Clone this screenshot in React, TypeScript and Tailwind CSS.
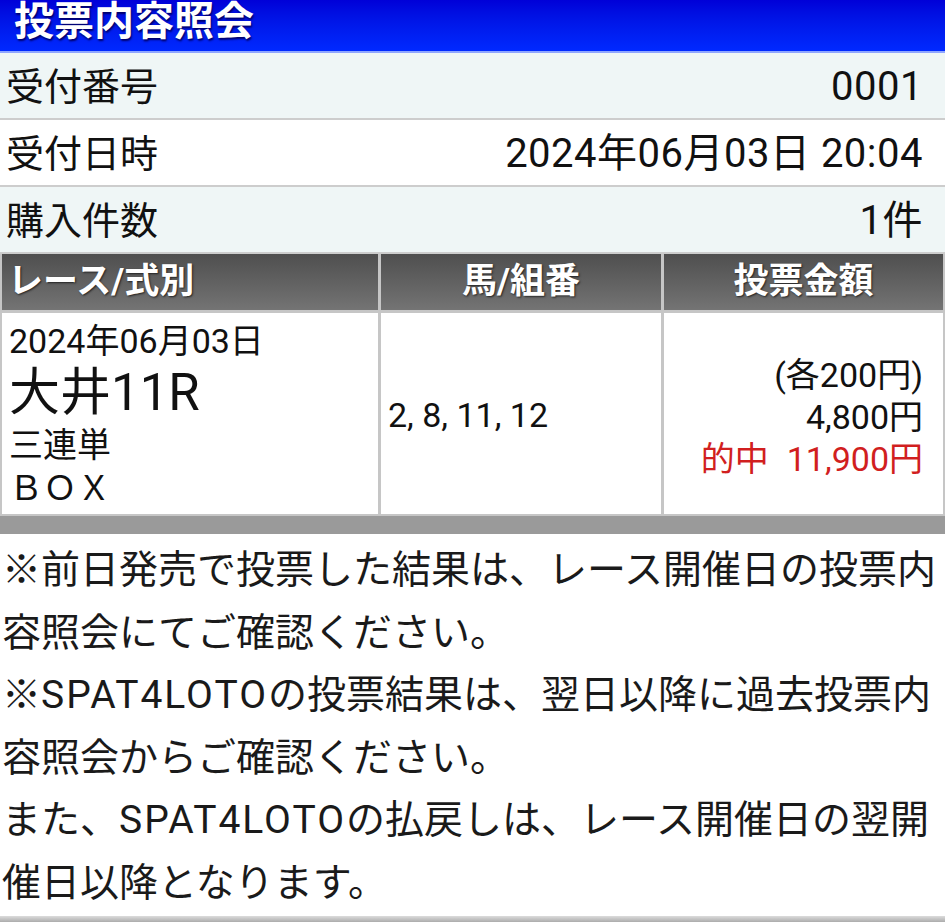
import React from 'react';

const font = "font-['Roboto','Noto_Sans_CJK_JP',sans-serif]";

function InfoRow({ label, value, shaded }: { label: string; value: string; shaded?: boolean }) {
  return (
    <div
      className={`flex h-[67px] items-center justify-between border-b-[2px] border-[#cdcdcd] pl-[6px] pr-[22px] pt-[3px] text-[40px] text-[#111] ${
        shaded ? 'bg-[#eff6f6]' : 'bg-white'
      }`}
    >
      <span className="text-[38px]">{label}</span>
      <span className="tracking-[0.5px]">{value}</span>
    </div>
  );
}

const Spat = () => <span className="tracking-[2px]">SPAT4LOTO</span>;

const headCell =
  'flex h-[56px] items-center bg-gradient-to-b from-[#4f4f4f] to-[#747474] text-[35px] font-bold text-white [text-shadow:1px_1px_2px_#222]';

export default function App() {
  return (
    <div className={`w-[945px] h-[922px] overflow-hidden bg-white ${font}`}>
      {/* title bar */}
      <div className="flex h-[53px] items-center border-b-[2px] border-[#8fa6ff] bg-gradient-to-b from-[#0000d8] to-[#0029ff] px-[14px] pb-[8px]">
        <h1 className="text-[40px] leading-[44px] font-bold text-white [text-shadow:1px_2px_2px_#00006a]">投票内容照会</h1>
      </div>

      <InfoRow label="受付番号" value="0001" shaded />
      <InfoRow label="受付日時" value="2024年06月03日 20:04" />
      <InfoRow label="購入件数" value="1件" shaded />

      {/* bet table */}
      <div className="grid grid-cols-[376px_280px_1fr] gap-[3px] bg-[#c6c6c6] px-[2px] pb-[2px]">
        <div className={`${headCell} pl-[6px]`}>レース/式別</div>
        <div className={`${headCell} justify-center`}>馬/組番</div>
        <div className={`${headCell} justify-center`}>投票金額</div>

        <div className="flex h-[201px] flex-col bg-white pl-[7px] pt-[6px] text-[#111]">
          <div className="text-[34px] leading-[44px]">2024年06月03日</div>
          <div className="text-[51px] leading-[60px]">大井11R</div>
          <div className="text-[34px] leading-[44px]">三連単</div>
          <div className="text-[34px] leading-[42px]">ＢＯＸ</div>
        </div>
        <div className="flex h-[201px] items-center bg-white pl-[7px] pt-[4px] text-[34px] text-[#111]">2, 8, 11, 12</div>
        <div className="flex h-[201px] flex-col items-end justify-center bg-white pr-[20px] pt-[6px] text-[34px] leading-[42px] text-[#111]">
          <span>(各200円)</span>
          <span>4,800円</span>
          <span className="text-[#d11f1f]">
            的中<span className="ml-[18px]">11,900円</span>
          </span>
        </div>
      </div>
      <div className="h-[18px] bg-[#9a9a9a]" />

      {/* notes */}
      <div className="pl-[2px] pt-[5px] text-[39px] leading-[62.5px] whitespace-nowrap text-[#1a1a1a]">
        <p>※前日発売で投票した結果は、レース開催日の投票内</p>
        <p>容照会にてご確認ください。</p>
        <p>
          ※<Spat />の投票結果は、翌日以降に過去投票内
        </p>
        <p>容照会からご確認ください。</p>
        <p>
          また、<Spat />の払戻しは、レース開催日の翌開
        </p>
        <p>催日以降となります。</p>
      </div>
      <div className="mt-[2px] h-[10px] bg-gradient-to-b from-[#dcdcdc] to-[#8e8e8e]" />
    </div>
  );
}
